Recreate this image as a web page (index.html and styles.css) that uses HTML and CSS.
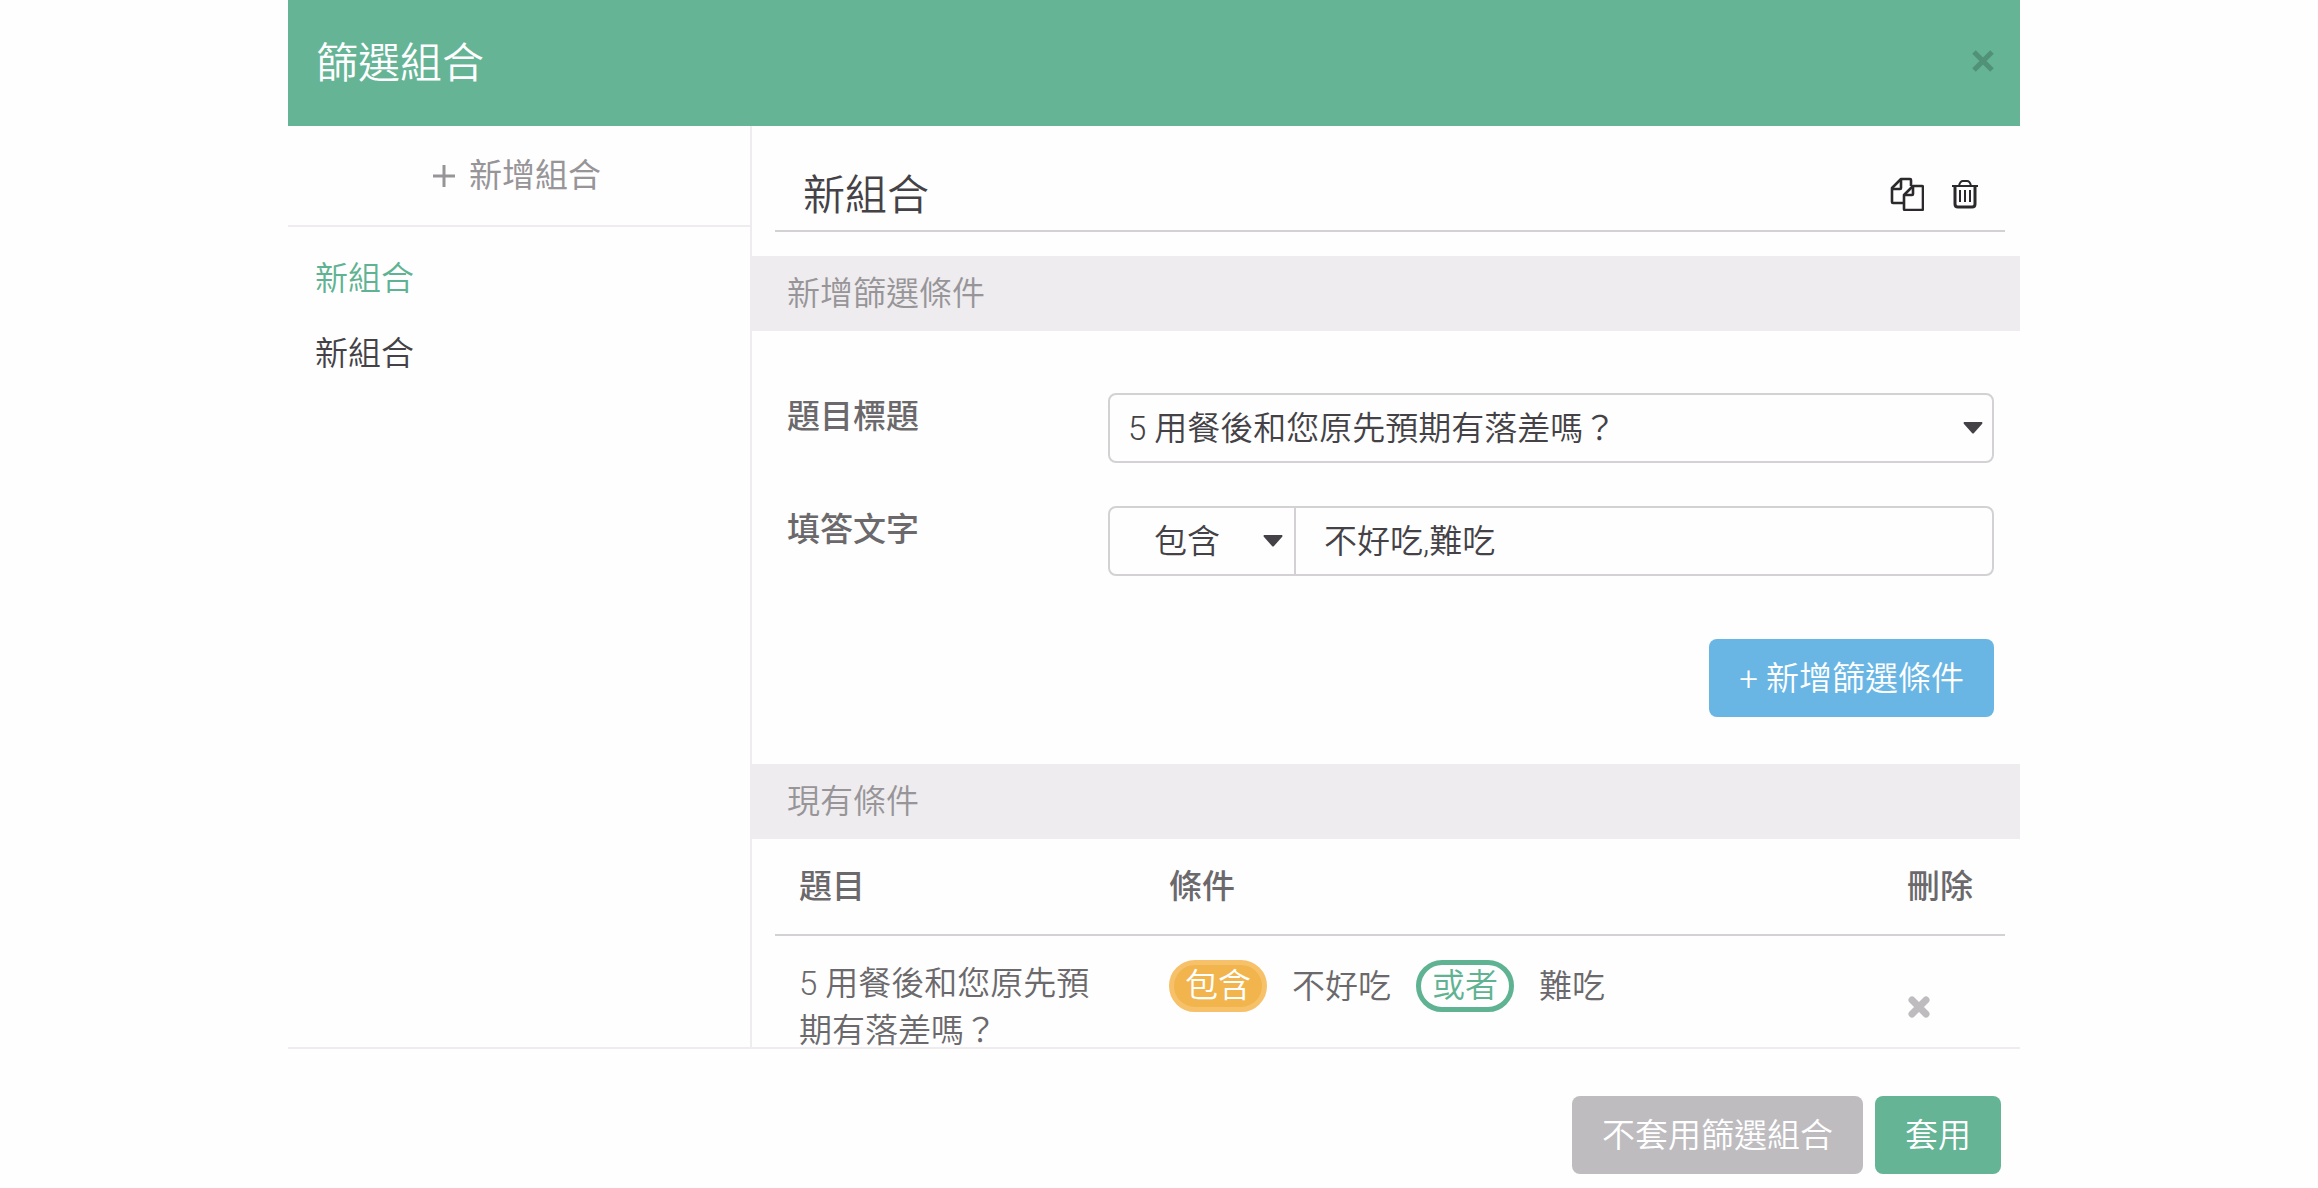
FILE: index.html
```
<!DOCTYPE html>
<html lang="zh-Hant">
<head>
  <meta charset="UTF-8" />
  <title>篩選組合</title>
  <link rel="stylesheet" href="styles.css">
</head>
<body>
  <div class="modal">
    <header class="modal-header">
      <h1>篩選組合</h1>
      <button class="icon-btn close-btn" aria-label="關閉">
        <svg width="22" height="22" viewBox="0 0 22 22"><path d="M2 2L20 20M20 2L2 20" fill="none" stroke="currentColor" stroke-width="5" /></svg>
      </button>
    </header>

    <div class="modal-body">
      <aside class="sidebar">
        <button class="add-group">
          <svg width="22" height="22" viewBox="0 0 22 22"><path d="M11 0V22M0 11H22" fill="none" stroke="currentColor" stroke-width="3" /></svg>
          新增組合
        </button>
        <ul class="group-list">
          <li><a href="#" class="active">新組合</a></li>
          <li><a href="#">新組合</a></li>
        </ul>
      </aside>

      <main class="content">
        <div class="title-row">
          <input class="title-input" type="text" value="新組合" aria-label="組合名稱" />
          <button class="icon-btn" aria-label="複製">
            <svg width="34" height="34" viewBox="0 0 34 34" fill="none" stroke="currentColor" stroke-width="2.6" stroke-linejoin="round">
              <path d="M13 26H3Q2 26 2 25V11L11 2H20Q21 2 21 3V9" />
              <path d="M2 12H10Q11 12 11 11V2" />
              <path d="M14 18L23 9H32Q33 9 33 10V32Q33 33 32 33H15Q14 33 14 32Z" />
              <path d="M14 18H22Q23 18 23 17V9" />
            </svg>
          </button>
          <button class="icon-btn" aria-label="刪除組合">
            <svg width="26" height="30" viewBox="0 0 26 30" fill="none" stroke="currentColor">
              <path d="M0 7H26" stroke-width="2" />
              <path d="M7 7Q8 2 11 2H15Q18 2 19 7" stroke-width="2" />
              <path d="M3 7V25Q3 28 6 28H20Q23 28 23 25V7" stroke-width="3" />
              <path d="M8 11V23M13 11V23M18 11V23" stroke-width="2" />
            </svg>
          </button>
        </div>

        <h2 class="section-title">新增篩選條件</h2>
        <form class="filter-form">
          <label for="question">題目標題</label>
          <div class="select-wrap">
            <select id="question">
              <option>5 用餐後和您原先預期有落差嗎？</option>
            </select>
            <svg class="caret" width="20" height="12" viewBox="0 0 20 12"><path d="M1 0H19Q20 1 19 2L11 11Q10 12 9 11L1 2Q0 1 1 0Z" fill="currentColor" /></svg>
          </div>
          <label for="answer">填答文字</label>
          <div class="input-group">
            <div class="select-wrap">
              <select class="operator" aria-label="比對方式">
                <option>包含</option>
              </select>
              <svg class="caret" width="20" height="12" viewBox="0 0 20 12"><path d="M1 0H19Q20 1 19 2L11 11Q10 12 9 11L1 2Q0 1 1 0Z" fill="currentColor" /></svg>
            </div>
            <input id="answer" type="text" value="不好吃,難吃" />
          </div>
          <button type="button" class="btn btn-blue">+ 新增篩選條件</button>
        </form>

        <h2 class="section-title">現有條件</h2>
        <table class="filter-table">
          <thead>
            <tr>
              <th class="col-question">題目</th>
              <th>條件</th>
              <th class="col-delete">刪除</th>
            </tr>
          </thead>
          <tbody>
            <tr>
              <td>5 用餐後和您原先預期有落差嗎？</td>
              <td>
                <div class="rule">
                  <span class="pill pill-orange">包含</span>
                  <span>不好吃</span>
                  <span class="pill pill-green">或者</span>
                  <span>難吃</span>
                </div>
              </td>
              <td class="delete-cell">
                <button class="icon-btn delete-btn" aria-label="刪除條件">
                  <svg width="24" height="24" viewBox="0 0 24 24"><path d="M5 5L19 19M19 5L5 19" fill="none" stroke="currentColor" stroke-width="7" stroke-linecap="round" /></svg>
                </button>
              </td>
            </tr>
          </tbody>
        </table>
      </main>
    </div>

    <footer class="modal-footer">
      <button class="btn btn-gray">不套用篩選組合</button>
      <button class="btn btn-green">套用</button>
    </footer>
  </div>
</body>
</html>
```
FILE: styles.css
```
* {
  box-sizing: border-box;
}

body {
  margin: 0;
  background-color: #fefefe;
  color: #6b696c;
  font-family: Roboto, "Noto Sans CJK TC", sans-serif;
  font-size: 33px;
  font-weight: 350;
  line-height: 47px;
}

button,
input,
select {
  font: inherit;
  color: inherit;
}

button {
  border: none;
  background: none;
  padding: 0;
  cursor: pointer;
}

svg {
  display: block;
}

.modal {
  display: flex;
  flex-direction: column;
  height: 100vh;
  margin: 0 298px 0 288px;
}

.modal-header {
  display: flex;
  align-items: center;
  justify-content: space-between;
  height: 126px;
  padding: 0 26px 4px 28px;
  background-color: #64b495;
  color: #fff;
  flex-shrink: 0;
}

h1 {
  margin: 0;
  padding-top: 4px;
  font-size: 42px;
  font-weight: 350;
}

.close-btn {
  color: #519178;
}

.modal-body {
  flex: 1;
  min-height: 0;
  display: flex;
  overflow: hidden;
  border-bottom: 2px solid #eeecef;
}

.sidebar {
  width: 464px;
  flex-shrink: 0;
  border-right: 2px solid #eeecef;
}

.add-group {
  display: flex;
  align-items: center;
  justify-content: center;
  gap: 14px;
  width: 100%;
  height: 101px;
  padding-right: 4px;
  border-bottom: 2px solid #eeecef;
  color: #979598;
  font-weight: 400;
}

.group-list {
  margin: 0;
  padding: 14px 27px;
  list-style: none;
}

.group-list a {
  display: block;
  padding: 14px 0;
  color: #444246;
  text-decoration: none;
}

.group-list .active {
  color: #5fb392;
}

.content {
  flex: 1;
  min-width: 0;
}

.title-row {
  display: flex;
  align-items: center;
  gap: 28px;
  margin: 30px 15px 24px 23px;
  padding: 2px 27px 0 28px;
  height: 76px;
  border-bottom: 2px solid #d3d1d4;
}

.title-input {
  flex: 1;
  min-width: 0;
  padding: 2px 0 0;
  border: none;
  background: none;
  color: #444246;
  font-size: 42px;
}

.title-row .icon-btn {
  color: #2b292c;
}

.section-title {
  margin: 0;
  padding: 14px 35px;
  background-color: #eeecef;
  color: #979598;
  font-size: 33px;
  font-weight: 350;
}

.filter-form {
  display: grid;
  grid-template-columns: 286px 1fr;
  column-gap: 35px;
  row-gap: 43px;
  padding: 62px 26px 47px 35px;
}

.filter-form label {
  font-weight: 500;
}

.select-wrap {
  position: relative;
  color: #444246;
}

select {
  appearance: none;
  width: 100%;
  height: 70px;
  padding: 0 60px 0 18px;
  border: 2px solid #d3d1d4;
  border-radius: 8px;
  background: none;
}

.caret {
  position: absolute;
  right: 11px;
  top: 29px;
  pointer-events: none;
}

.input-group {
  display: flex;
  height: 70px;
  border: 2px solid #d3d1d4;
  border-radius: 8px;
}

.input-group .select-wrap {
  width: 186px;
  border-right: 2px solid #d3d1d4;
}

.input-group .operator {
  height: 66px;
  padding: 0 40px 0 44px;
  border: none;
}

.input-group .caret {
  top: 27px;
}

.input-group input {
  flex: 1;
  min-width: 0;
  padding: 0 28px;
  border: none;
  background: none;
  color: #444246;
}

.btn {
  height: 78px;
  padding: 0 30px;
  border-radius: 8px;
  color: #fff;
}

.btn-blue {
  grid-column: 2;
  justify-self: end;
  margin-top: 20px;
  background-color: #69b6e5;
}

.btn-gray {
  background-color: #bebcbf;
}

.btn-green {
  background-color: #64b495;
}

.filter-table {
  width: calc(100% - 38px);
  margin-left: 23px;
  border-collapse: collapse;
  table-layout: fixed;
}

.filter-table th {
  height: 96px;
  padding: 0 24px;
  border-bottom: 2px solid #d3d1d4;
  font-weight: 500;
  text-align: left;
}

.filter-table td {
  padding: 24px;
  vertical-align: top;
}

.col-question {
  width: 370px;
}

.col-delete {
  width: 122px;
}

.rule {
  display: flex;
  align-items: center;
  gap: 25px;
}

.pill {
  border: 5px solid;
  border-radius: 26px;
  padding: 0 11px;
  line-height: 42px;
}

.pill-orange {
  border-color: #f6c168;
  background-color: #f2b54d;
  color: #fff;
}

.pill-green {
  border-color: #5fb392;
  color: #5fb392;
}

.filter-table .delete-cell {
  vertical-align: middle;
}

.delete-btn {
  color: #bebcbf;
}

.modal-footer {
  display: flex;
  justify-content: flex-end;
  gap: 12px;
  padding: 47px 19px 14px;
}
```
